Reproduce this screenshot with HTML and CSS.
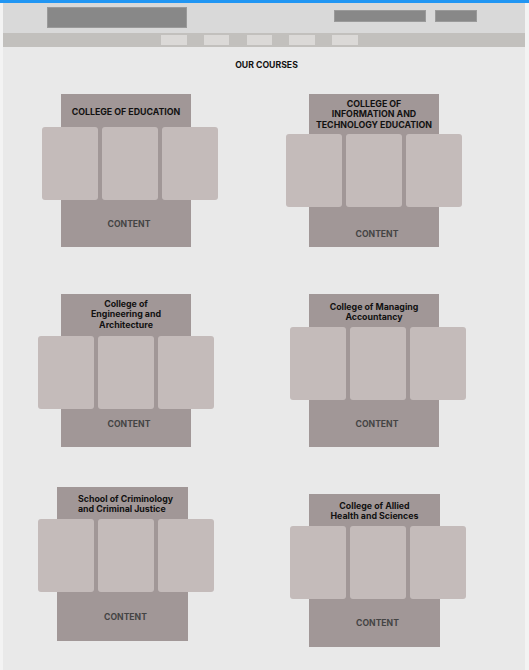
FILE: index.html
```html
<!DOCTYPE html>
<html lang="en">
<head>
<meta charset="UTF-8">
<meta name="viewport" content="width=device-width, initial-scale=1.0">
<title>Our Courses</title>
<link rel="stylesheet" href="styles.css">
</head>
<body>
<div class="page">
    <header class="topbar">
        <div class="logo"></div>
        <div class="top-actions">
            <span class="search"></span>
            <span class="login"></span>
        </div>
    </header>
    <nav class="nav">
        <span class="nav-item"></span>
        <span class="nav-item"></span>
        <span class="nav-item"></span>
        <span class="nav-item"></span>
        <span class="nav-item"></span>
    </nav>

    <main>
        <h2 class="section-title">OUR COURSES</h2>
        <div class="courses">
            <div class="course edu">
                <div class="course-title">COLLEGE OF EDUCATION</div>
                <div class="tiles">
                    <div class="tile"></div>
                    <div class="tile"></div>
                    <div class="tile"></div>
                </div>
                <div class="course-content">CONTENT</div>
            </div>
            <div class="course ite">
                <div class="course-title">COLLEGE OF<br>INFORMATION AND<br>TECHNOLOGY EDUCATION</div>
                <div class="tiles">
                    <div class="tile"></div>
                    <div class="tile"></div>
                    <div class="tile"></div>
                </div>
                <div class="course-content">CONTENT</div>
            </div>
            <div class="course eng">
                <div class="course-title">College of<br>Engineering and<br>Architecture</div>
                <div class="tiles">
                    <div class="tile"></div>
                    <div class="tile"></div>
                    <div class="tile"></div>
                </div>
                <div class="course-content">CONTENT</div>
            </div>
            <div class="course acc">
                <div class="course-title">College of Managing<br>Accountancy</div>
                <div class="tiles">
                    <div class="tile"></div>
                    <div class="tile"></div>
                    <div class="tile"></div>
                </div>
                <div class="course-content">CONTENT</div>
            </div>
            <div class="course crim">
                <div class="course-title">School of Criminology<br>and Criminal Justice</div>
                <div class="tiles">
                    <div class="tile"></div>
                    <div class="tile"></div>
                    <div class="tile"></div>
                </div>
                <div class="course-content">CONTENT</div>
            </div>
            <div class="course health">
                <div class="course-title">College of Allied<br>Health and Sciences</div>
                <div class="tiles">
                    <div class="tile"></div>
                    <div class="tile"></div>
                    <div class="tile"></div>
                </div>
                <div class="course-content">CONTENT</div>
            </div>
        </div>
    </main>
</div>
</body>
</html>
```

FILE: styles.css
```css
body {
    margin: 0;
    font-family: "Inter", "Liberation Sans", sans-serif;
    background-color: #f3f3f3;
    border-top: 3px solid #2196f3;
}
.page {
    margin: 0 4px 0 3px;
    min-height: calc(100vh - 3px);
    background-color: #e9e9e9;
}

/* header placeholders */
.topbar {
    height: 30px;
    box-sizing: border-box;
    display: flex;
    justify-content: space-between;
    align-items: flex-start;
    padding: 4px 48px 0 44px;
    background-color: #d9d9d9;
}
.logo {
    width: 140px;
    height: 21px;
    background-color: #888888;
    box-shadow: inset 0 0 0 1px #9a9a9a;
}
.top-actions {
    display: flex;
    gap: 9px;
    margin-top: 3px;
}
.search, .login {
    height: 12px;
    background-color: #888888;
    box-shadow: inset 0 0 0 1px #9a9a9a;
}
.search { width: 92px; }
.login { width: 42px; }

.nav {
    height: 14px;
    box-sizing: border-box;
    display: flex;
    gap: 17.25px;
    padding: 2.4px 0 0 158px;
    background-color: #c2c0bd;
}
.nav-item {
    width: 25.5px;
    height: 10px;
    background-color: #dbd9d7;
}

/* courses */
.section-title {
    margin: 0 0 24px;
    padding-top: 13px;
    padding-left: 5px;
    font-size: 8.7px;
    line-height: 10px;
    font-weight: 700;
    text-align: center;
    color: #111;
}
.courses {
    display: grid;
    grid-template-columns: 130px 130px;
    column-gap: 118px;
    row-gap: 47px;
    align-items: start;
    padding-left: 58px;
}
.course {
    width: 130px;
    height: 153px;
    display: flex;
    flex-direction: column;
    align-items: center;
    background-color: #a19797;
}
.course-title {
    align-self: stretch;
    box-sizing: border-box;
    height: 33px;
    padding-top: 13px;
    font-size: 8.8px;
    line-height: 10.4px;
    font-weight: 700;
    text-align: center;
    white-space: nowrap;
    color: #111;
}
.tiles {
    display: flex;
    gap: 4px;
    flex-shrink: 0;
}
.tile {
    width: 56px;
    height: 73px;
    border-radius: 3px;
    background-color: #c4bbba;
}
.course-content {
    flex: 1;
    display: flex;
    justify-content: center;
    align-items: center;
    padding-left: 6px;
    font-size: 8.6px;
    font-weight: 700;
    color: #444;
}

.edu .tiles { margin-left: 8px; }

.ite .course-title { height: 40px; padding-top: 5px; }
.ite .course-content { padding-top: 14px; }

.eng .course-title { height: 42px; padding-top: 5px; }
.eng .course-content { padding-bottom: 8px; }

.acc .course-title { height: 33px; padding-top: 8px; }
.acc .tiles { margin-left: 8px; }

.crim {
    width: 131px;
    height: 154px;
    margin: -7px 0 0 -4px;
}
.crim .course-title {
    height: 32px;
    padding: 7px 0 0 21px;
    text-align: left;
}
.crim .tiles { margin-left: 7px; }

.health { width: 131px; }
.health .course-title { height: 32px; padding-top: 7px; }
.health .tiles { margin-left: 7px; }
```
